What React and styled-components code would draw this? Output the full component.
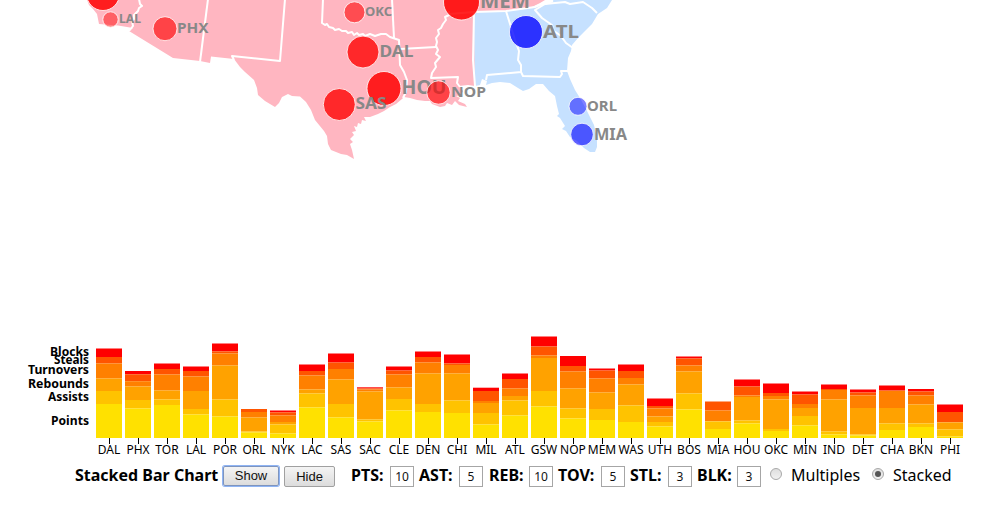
import React from 'react';
import styled, { createGlobalStyle } from 'styled-components';

const GlobalStyle = createGlobalStyle`
  html, body { margin: 0; background: #fff; overflow: hidden; }
  body { font-family: "Noto Sans", "Open Sans", sans-serif; color: #000; }
`;

const Page = styled.main`
  display: flex;
  flex-direction: column;
  width: 1000px;
  height: 510px;
  overflow: hidden;
`;
const MapCanvas = styled.svg`
  display: block;
  flex: 0 0 330px;
  width: 1000px;
`;
const Land = styled.path`
  fill: ${(p) => (p.$east ? '#c6e1ff' : '#ffb6c1')};
`;
const Border = styled.path`
  fill: none;
  stroke: #fff;
  stroke-width: 2;
  stroke-linejoin: round;
`;
const TeamDot = styled.circle`
  fill: ${(p) => (p.$east ? 'blue' : 'red')};
  stroke: #fff;
  stroke-width: 1;
  stroke-opacity: 0.8;
`;
const TeamName = styled.text`
  font-family: "Noto Sans", sans-serif;
  font-weight: 700;
  fill: #888;
`;
const Chart = styled.svg`
  display: block;
  flex: 0 0 130px;
  width: 1000px;
`;
const SeriesLabel = styled.text`
  font: 700 12px "Noto Sans", sans-serif;
`;
const AxisLabel = styled.text`
  font: 400 12px "Noto Sans", sans-serif;
`;

const Controls = styled.form`
  display: flex;
  align-items: flex-start;
  height: 32px;
  padding: 5px 0 0 75px;
`;
const Label = styled.span`
  flex: none;
  width: ${(p) => p.$w}px;
  margin-left: ${(p) => p.$gap || 0}px;
  font-size: 16px;
  line-height: 20px;
  font-weight: ${(p) => (p.$plain ? 400 : 700)};
  white-space: nowrap;
`;
const Button = styled.button`
  box-sizing: border-box;
  flex: none;
  width: ${(p) => p.$w}px;
  height: ${(p) => (p.$focused ? 20 : 21)}px;
  margin: 1px 0 0 ${(p) => p.$gap}px;
  padding: 0;
  border: 1px solid ${(p) => (p.$focused ? '#7d94be' : '#a0a0a0')};
  border-radius: 2px;
  box-shadow: ${(p) => (p.$focused ? '0 0 0 1px #8fb4f4' : 'none')};
  background: linear-gradient(#f4f4f4, #dcdcdc);
  color: #111;
  font: 13px/18px "Liberation Sans", sans-serif;
`;
const Field = styled.input`
  box-sizing: border-box;
  flex: none;
  width: 24px;
  height: 21px;
  margin: 1px 0 0;
  padding: 0;
  border: 1px solid #a6a6a6;
  background: #fff;
  color: #111;
  text-align: center;
  font: 12px/18px "Noto Sans", sans-serif;
`;
const Radio = styled.span`
  box-sizing: border-box;
  display: flex;
  align-items: center;
  justify-content: center;
  flex: none;
  width: 12px;
  height: 12px;
  margin: 3px 0 0 ${(p) => p.$gap}px;
  border: 1px solid #a8a8a8;
  border-radius: 50%;
  background: linear-gradient(#dedede, #f1f1f1);
  &::after {
    content: "";
    width: 6px;
    height: 6px;
    border-radius: 50%;
    background: ${(p) => (p.$checked ? '#555' : 'transparent')};
  }
`;

const WEST = [
  'M87 0L89 5L93 9L97 14L98 19L99 24L118 25.500L133 28L129 31L173 58L200 61L210 63L211 56.500L234 59L240 67L245 72L254 80L257 88L258 95L265 101L275 107L279 103L282 97L288 94L292 96L300 96.500L306 102L311 110L315 120L324 131L327 136L328 144L331 150L341 154L347 155L354 159L352 150L350 144L353 142L350 139L354 135L352 132L356 131L354 126L357 127L358 123L361 124L362 120L366 121L364 117L370 117L378 114L384 111L390 107L396 104L402 99L404 97L410 98L417 100L425 101L430 101L432 104L440 107L445 106L447 103L452 105L455 101L459 105L467 107L465 104L458 101L460 98L456 96L461 95L463 91L459 86L468 85L475 86L474 12L506 11L530 8L540 3L545 0Z',
];
const EAST = 'M474 12L506 11L530 8L545 3L552 0L612 0L607 8L598 14L592 24L584 32L578 38L572 45L571 51L568 58L567 71L570 79L575 90L580 98L586 109L594 125L597 138L597 147L595 152L590 152L584 148L577 141L570 137L566 131L562 129L565 126L560 118L557 116L559 114L557 106L555 96L549 91L543 84L536 84L529 89L523 91L518 88L510 83L500 82L492 83L486 85L487 81L482 79L480 85L475 86Z';
const BORDERS = [
  'M139 -1L140 4L142 6L139 8L138 11L134 15L134 19L132 21L133 26L129 31',
  'M208 -1L200 62',
  'M285 -1L280 61L232 56L234 60',
  'M323 -1L322 23L325 25L327 24L329 27L333 28L335 30L339 29L342 31L346 31L348 33L352 32L354 35L357 33L359 35L363 34L365 36L370 34L375 36L381 34L386 34L390 37L399 40L400 65L404 72L407 80L406 92L403 98',
  'M392 -1L394 38',
  'M400 49L436 47',
  'M449 11L449 15L445 17L446 20L443 24L441 28L438 30L439 34L436 38L437 42L436 46L438 50L436 54L440 57L435 63L436 67L432 73L431 78L458 77L457 83L460 87',
  'M449 14L474 12L473 60L475 86',
  'M474 12L506 11L535 7L545 3L553 0',
  'M506 11L515 40L519 51L518 60L521 65L521 72L487 75L486 80',
  'M521 72L523 76L560 77L562 74L561 71L568 71',
  'M553 1L545 4L535 10L542 18L552 25L554 31L561 36L566 43L573 48',
  'M545 4L565 2L570 4L583 2L592 8L597 13',
];

// name, x, y, radius, opacity, label x, label baseline, size, label width, east
const TEAMS = [
  ['LAC', 103, -6, 16.5, 0.84, 0, 0, 0, 0],
  ['LAL', 110.5, 19.5, 7.7, 0.48, 119, 23, 12, 22],
  ['PHX', 165, 28.7, 12, 0.63, 177, 33, 15, 31.5],
  ['OKC', 354.5, 12.3, 10.5, 0.58, 365, 16, 12, 27],
  ['DAL', 363, 52, 16, 0.78, 379.5, 57, 16.5, 34],
  ['HOU', 384, 88.5, 17, 0.84, 401.5, 94, 19, 45],
  ['SAS', 339.3, 104.5, 16, 0.78, 355.5, 109, 16.5, 31],
  ['NOP', 438.5, 92.5, 11.7, 0.64, 451, 97, 15, 35],
  ['MEM', 461.5, 2, 18, 0.86, 480, 8, 19, 50],
  ['ATL', 526, 32, 16.5, 0.78, 543, 38, 18.5, 36, true],
  ['ORL', 578, 106.3, 9, 0.5, 587, 111, 14.5, 30, true],
  ['MIA', 582, 134.5, 11.3, 0.62, 594, 140, 16.5, 33, true],
];

// top edge of each layer: blocks, steals, turnovers, rebounds, assists, points
const BARS = [
  ['DAL', 18.5, 27, 33.5, 48.5, 61, 74],
  ['PHX', 41, 44.3, 51.2, 56.5, 70, 78.5],
  ['TOR', 33.5, 39, 44.5, 60.5, 69.5, 75],
  ['LAL', 36.5, 41, 46.5, 61, 79, 84.5],
  ['POR', 13.5, 21.4, 23.5, 35.5, 69.5, 86.5],
  ['ORL', 79, 79, 82, 87.5, 101.5, 102.5],
  ['NYK', 80.5, 82.4, 85.5, 92, 94.5, 103.5],
  ['LAC', 34.5, 41, 45.5, 59.5, 63.5, 77.5],
  ['SAS', 23.5, 32.5, 39, 49.5, 74, 87.5],
  ['SAC', 57.3, 58.5, 59.5, 61.5, 89.5, 91.5],
  ['CLE', 36.5, 40.5, 44.5, 57.5, 69, 80.5],
  ['DEN', 21.5, 27, 32.5, 43.5, 74, 82],
  ['CHI', 24.5, 33.5, 35, 43.5, 70.5, 83],
  ['MIL', 57.7, 61, 71, 73, 83, 94.5],
  ['ATL', 43.5, 49, 58.5, 66, 70.5, 85.5],
  ['GSW', 6.5, 16.5, 25.5, 28, 61, 76.5],
  ['NOP', 26, 36, 41.5, 58.5, 78.5, 88.5],
  ['MEM', 38.5, 40.5, 48.5, 62.5, 79, 90],
  ['WAS', 34.5, 41, 48, 54.5, 75.5, 92],
  ['UTH', 68.5, 76, 78.5, 86.5, 92, 96.5],
  ['BOS', 26.5, 28.5, 35.5, 41.5, 63.5, 79.5],
  ['MIA', 71.5, 71.5, 80.5, 91, 91.5, 99],
  ['HOU', 49.5, 56.5, 65.5, 67, 90.5, 93.5],
  ['OKC', 53.5, 63, 66, 69.5, 99, 101],
  ['MIN', 61.5, 64.5, 74, 78, 86, 95.5],
  ['IND', 54.5, 59, 60, 69.5, 101.5, 104.5],
  ['DET', 59.5, 62.5, 65.5, 78, 104.5, 105.5],
  ['CHA', 55.5, 60.5, 61, 78, 93.5, 100],
  ['BKN', 59, 61.5, 65.5, 74.5, 93.5, 97],
  ['PHI', 74.5, 82, 92, 92.5, 99.5, 106.5],
];
const LAYER_COLORS = ['#ff0000', '#ff5500', '#ff8000', '#ffa200', '#ffc300', '#ffe100'];
const SERIES = [['Blocks', 26, 39], ['Steals', 34, 35], ['Turnovers', 44, 61], ['Rebounds', 58, 61], ['Assists', 71, 41], ['Points', 95, 38]];
const BASE = 108;

const WEIGHTS = [
  { name: 'PTS:', value: 10, gap: 16, w: 39 },
  { name: 'AST:', value: 5, gap: 5, w: 40 },
  { name: 'REB:', value: 10, gap: 6, w: 40 },
  { name: 'TOV:', value: 5, gap: 5, w: 43 },
  { name: 'STL:', value: 3, gap: 5, w: 38 },
  { name: 'BLK:', value: 3, gap: 5, w: 40 },
];

function TeamMap() {
  return (
    <MapCanvas viewBox="0 0 1000 330">
      {WEST.map((d) => <Land key={d} d={d} />)}
      <Land $east d={EAST} />
      {BORDERS.map((d) => <Border key={d} d={d} />)}
      {TEAMS.map(([name, x, y, r, o, lx, ly, size, len, east]) => (
        <g key={name}>
          {size > 0 && <TeamName x={lx} y={ly} fontSize={size} textLength={len} lengthAdjust="spacingAndGlyphs">{name}</TeamName>}
          <TeamDot $east={east} cx={x} cy={y} r={r} fillOpacity={o} />
        </g>
      ))}
    </MapCanvas>
  );
}

function StackedChart() {
  return (
    <Chart viewBox="0 0 1000 130">
      {SERIES.map(([name, y, len]) => (
        <SeriesLabel key={name} x={89 - len} y={y} textLength={len} lengthAdjust="spacingAndGlyphs">{name}</SeriesLabel>
      ))}
      {BARS.map(([name, ...tops], i) => {
        const x = 96 + i * 29;
        return (
          <g key={name}>
            {tops.map((top, k) => (
              <rect key={k} x={x} y={top} width="26" height={(k < 5 ? tops[k + 1] : BASE) - top} fill={LAYER_COLORS[k]} />
            ))}
            <rect x={x + 13} y={BASE} width="1" height="6" />
            <AxisLabel x={x + 13} y="124" textAnchor="middle">{name}</AxisLabel>
          </g>
        );
      })}
    </Chart>
  );
}

export default function App() {
  return (
    <Page>
      <GlobalStyle />
      <TeamMap />
      <StackedChart />
      <Controls>
        <Label $w={143}>Stacked Bar Chart</Label>
        <Button type="button" $w={56} $gap={5} $focused>Show</Button>
        <Button type="button" $w={51} $gap={5}>Hide</Button>
        {WEIGHTS.map(({ name, value, gap, w }) => (
          <React.Fragment key={name}>
            <Label $w={w} $gap={gap}>{name}</Label>
            <Field defaultValue={value} />
          </React.Fragment>
        ))}
        <Radio $gap={9} />
        <Label $plain $w={71} $gap={9}>Multiples</Label>
        <Radio $gap={10} $checked />
        <Label $plain $w={62} $gap={9}>Stacked</Label>
      </Controls>
    </Page>
  );
}
